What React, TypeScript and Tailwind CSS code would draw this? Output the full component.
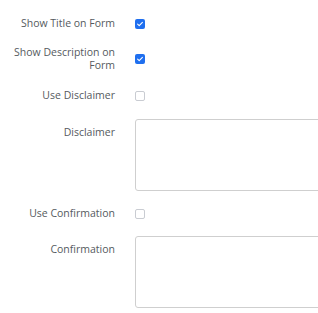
import { useState } from "react";

interface Field {
  id: string;
  label: string;
  kind: "check" | "text";
  checked?: boolean;
  gap: string;
}

const FIELDS: Field[] = [
  { id: "show_title", label: "Show Title on Form", kind: "check", checked: true, gap: "mt-0" },
  { id: "show_desc", label: "Show Description on Form", kind: "check", checked: true, gap: "mt-[16px]" },
  { id: "use_disclaimer", label: "Use Disclaimer", kind: "check", checked: false, gap: "mt-[17px]" },
  { id: "disclaimer", label: "Disclaimer", kind: "text", gap: "mt-[17px]" },
  { id: "use_confirmation", label: "Use Confirmation", kind: "check", checked: false, gap: "mt-[16px]" },
  { id: "confirmation", label: "Confirmation", kind: "text", gap: "mt-[16px]" },
];

function Checkbox({ checked, onChange }: { checked: boolean; onChange: () => void }) {
  return (
    <button
      onClick={onChange}
      className={
        checked
          ? "w-[10px] h-[10px] rounded-[2px] bg-[#1f6fef] flex items-center justify-center"
          : "w-[10px] h-[10px] rounded-[2px] border border-[#c9ccd2] bg-white"
      }
    >
      {checked && (
        <svg width="8" height="8" viewBox="0 0 8 8" fill="none">
          <path d="M1.6 4.2 L3.2 5.7 L6.4 2.4" stroke="white" strokeWidth="1.1" strokeLinecap="round" strokeLinejoin="round" />
        </svg>
      )}
    </button>
  );
}

export default function App() {
  const [values, setValues] = useState<Record<string, boolean>>(() =>
    Object.fromEntries(FIELDS.filter((f) => f.kind === "check").map((f) => [f.id, !!f.checked]))
  );

  return (
    <div
      className="w-[318px] h-[313px] bg-white overflow-hidden pt-[17px] flex flex-col text-[10.5px] leading-[13px] text-[#555a60]"
      style={{ fontFamily: '"Open Sans", "Noto Sans", sans-serif' }}
    >
      {FIELDS.map((f) =>
        f.kind === "check" ? (
          <div key={f.id} className={`flex items-center ${f.gap}`}>
            <label className="w-[115px] shrink-0 pl-[12px] text-right">{f.label}</label>
            <div className="ml-[20px] flex">
              <Checkbox
                checked={values[f.id]}
                onChange={() => setValues((v) => ({ ...v, [f.id]: !v[f.id] }))}
              />
            </div>
          </div>
        ) : (
          <div key={f.id} className={`flex items-start ${f.gap}`}>
            <label className="w-[115px] shrink-0 pl-[12px] pt-[7px] text-right">{f.label}</label>
            <textarea className="ml-[20px] w-[200px] h-[72px] shrink-0 rounded-[3px] border border-[#cfcfcf] resize-none outline-none" />
          </div>
        )
      )}
    </div>
  );
}
